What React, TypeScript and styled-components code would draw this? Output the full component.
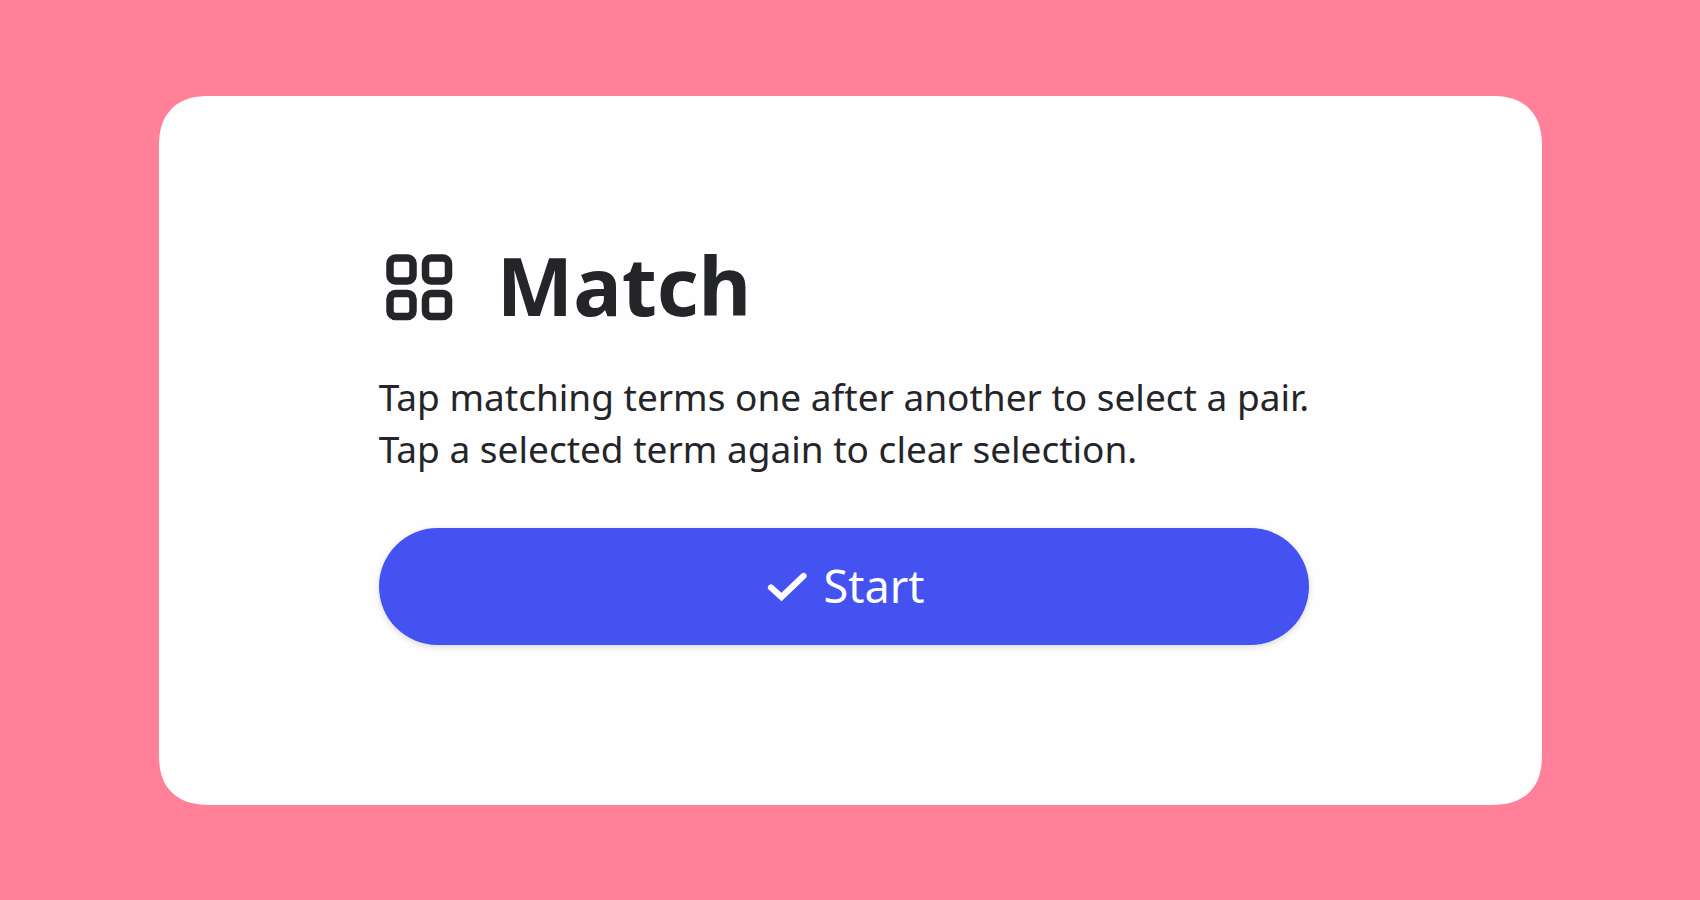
import React from 'react';
import styled, { createGlobalStyle } from 'styled-components';

const GlobalStyle = createGlobalStyle`
  * { box-sizing: border-box; }
  body {
    margin: 0;
    background: #ff8098;
    color: #242529;
    font-family: "Noto Sans", sans-serif;
  }
`;

const Page = styled.main`
  display: flex;
  min-height: 100vh;
  padding: 96px 158px 95px 159px;
`;

const Card = styled.section`
  flex: 1;
  display: flex;
  justify-content: center;
  align-items: flex-start;
  padding: 133px 40px 40px 27px;
  border-radius: 50px;
  corner-shape: superellipse(1.25);
  background: #fefefe;
`;

const Content = styled.div`
  display: flex;
  flex-direction: column;
`;

const Header = styled.header`
  display: flex;
  align-items: center;
  gap: 44px;
  padding-left: 7px;
`;

const Title = styled.h1`
  margin: 0;
  font-size: 81px;
  line-height: 112px;
  font-weight: 700;
`;

const Instructions = styled.p`
  margin: 30px 0 0;
  font-size: 37px;
  line-height: 52px;
`;

const Line = styled.span`
  display: block;
`;

const StartButton = styled.button`
  display: flex;
  justify-content: center;
  align-items: center;
  gap: 16px;
  height: 117px;
  margin-top: 53px;
  padding: 0 0 2px 4px;
  border: 0;
  border-radius: 60px;
  background: #4452f2;
  color: #fefefe;
  font: 400 45px/60px "Noto Sans", sans-serif;
  box-shadow: 0 2px 6px rgba(0, 0, 0, 0.15);
  cursor: pointer;
`;

const MatchIcon = () => (
  <svg width="67" height="72" viewBox="0 -4 67 72" fill="none" stroke="currentColor" strokeWidth="7.5" aria-hidden="true">
    <rect x="4" y="5" width="23" height="23" rx="5.5" />
    <rect x="39.5" y="5" width="23" height="23" rx="5.5" />
    <rect x="4" y="40.5" width="23" height="23" rx="5.5" />
    <rect x="39.5" y="40.5" width="23" height="23" rx="5.5" />
  </svg>
);

const CheckIcon = () => (
  <svg width="40" height="32" viewBox="0 0 40 32" fill="none" stroke="currentColor" strokeWidth="6.2" strokeLinecap="round" strokeLinejoin="miter" aria-hidden="true">
    <path d="M4 17.5 L14.5 27 L36.5 6" />
  </svg>
);

export default function App() {
  return (
    <>
      <GlobalStyle />
      <Page>
        <Card>
          <Content>
            <Header>
              <MatchIcon />
              <Title>Match</Title>
            </Header>
            <Instructions>
              <Line>Tap matching terms one after another to select a pair.</Line>
              <Line>Tap a selected term again to clear selection.</Line>
            </Instructions>
            <StartButton type="button">
              <CheckIcon />
              Start
            </StartButton>
          </Content>
        </Card>
      </Page>
    </>
  );
}
